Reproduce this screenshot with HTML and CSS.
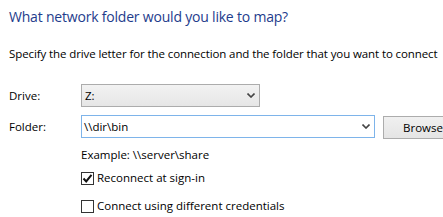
FILE: index.html
```html
<!doctype html>
<html>
	<head>
		<meta charset="utf-8"/>
		<title>Map Network Drive</title>
		<link rel="stylesheet" href="styles.css">
	</head>
	<body>
		<div id="page">
			<h1 class="title">What network folder would you like to map?</h1>
			<p class="intro">Specify the drive letter for the connection and the folder that you want to connect</p>
			<div class="form">
				<div class="row">
					<span class="label">Drive:</span>
					<div class="combo combo-drive">
						<span class="value">Z:</span>
						<svg class="arrow" width="8" height="5" viewBox="0 0 8 5"><path d="M0.5 0.5 L4 4 L7.5 0.5" fill="none" stroke="#444" stroke-width="1.6"/></svg>
					</div>
				</div>
				<div class="row">
					<span class="label">Folder:</span>
					<div class="combo combo-folder">
						<span class="value">\\dir\bin</span>
						<svg class="arrow" width="8" height="5" viewBox="0 0 8 5"><path d="M0.5 0.5 L4 4 L7.5 0.5" fill="none" stroke="#444" stroke-width="1.6"/></svg>
					</div>
					<button class="browse">Browse...</button>
				</div>
				<div class="hint">Example: \\server\share</div>
				<label class="check check-first">
					<span class="box"><svg width="11" height="11" viewBox="0 0 11 11"><path d="M1.5 5.5 L4.2 8.4 L9.5 1.8" fill="none" stroke="#111" stroke-width="2"/></svg></span>
					Reconnect at sign-in
				</label>
				<label class="check">
					<span class="box"></span>
					Connect using different credentials
				</label>
			</div>
		</div>
	</body>
</html>
```
FILE: styles.css
```css
*{margin:0;padding:0;box-sizing:border-box;}
body{
	background:#fff;
	font-family:"Open Sans","Noto Sans",sans-serif;
	font-size:11.5px;
	color:#000;
	overflow:hidden;
}
#page{
	width:443px;
	height:217px;
	padding:5px 0 0 9px;
}
.title{
	font-size:14px;
	letter-spacing:-0.2px;
	font-weight:normal;
	color:#1e3c8c;
	line-height:24px;
}
.intro{
	margin-top:16px;
	line-height:18px;
	letter-spacing:-0.1px;
	white-space:nowrap;
}
.form{
	margin-top:21px;
	padding-left:72px;
}
.row{
	display:flex;
	align-items:center;
	margin-left:-72px;
	margin-bottom:7px;
	white-space:nowrap;
}
.label{
	width:72px;
	flex-shrink:0;
}
.combo{
	display:flex;
	align-items:center;
	justify-content:space-between;
	height:23px;
	border:1px solid #acacac;
	padding:0 4px 0 3px;
	flex-shrink:0;
}
.combo-drive{
	width:179px;
	background:linear-gradient(#f2f2f2,#e6e6e6);
}
.combo-folder{
	width:294px;
	background:#fff;
	border-color:#7eb4ea;
	padding-left:2px;
}
.browse{
	flex-shrink:0;
	margin:2px 0 0 8px;
	width:80px;
	height:23px;
	border:1px solid #acacac;
	background:linear-gradient(#f0f0f0,#e5e5e5);
	font:inherit;
	text-align:left;
	padding-left:19px;
}
.hint{
	margin-top:2px;
	line-height:18px;
}
.check{
	display:flex;
	align-items:center;
	margin-top:10px;
	line-height:18px;
}
.check-first{
	margin-top:5px;
}
.box{
	display:flex;
	align-items:center;
	justify-content:center;
	width:13px;
	height:13px;
	border:1px solid #333;
	background:#fff;
	margin-right:3px;
}
```
